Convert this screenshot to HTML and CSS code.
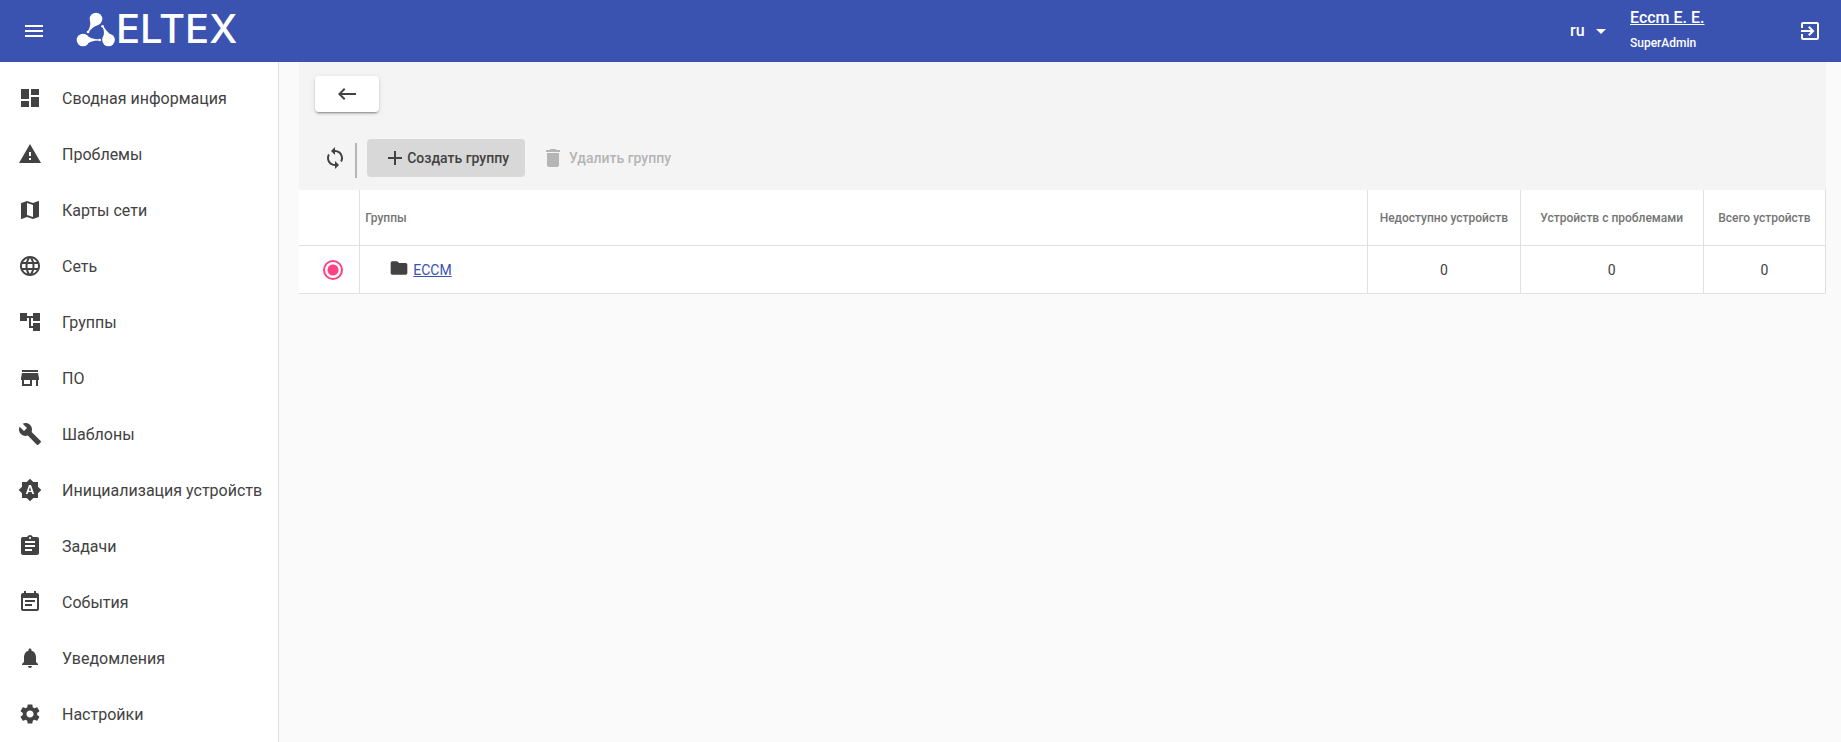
FILE: index.html
```
<!DOCTYPE html>
<html lang="ru">
<head>
    <meta charset="UTF-8">
    <meta name="viewport" content="width=device-width, initial-scale=1.0">
    <title>ECCM</title>
    <link rel="stylesheet" href="styles.css">
</head>
<body>
    <header class="header">
        <button class="icon-button" type="button" aria-label="Меню">
            <svg class="icon" viewBox="0 0 24 24"><path d="M3 18h18v-2H3v2zm0-5h18v-2H3v2zm0-7v2h18V6H3z"/></svg>
        </button>
        <a class="logo" href="#">
            <svg class="logo-mark" viewBox="0 0 40 36">
                <circle cx="20" cy="8" r="6.3"/>
                <circle cx="7" cy="29" r="6.3"/>
                <circle cx="32.500" cy="29" r="6.3"/>
                <path d="M13.800 9Q15.500 14 11.800 20.600L12.800 21.200Q16.500 15.500 21.500 14.200z"/>
                <path d="M38 26Q32 22.500 27.200 15L26.200 15.600Q29.500 22 26.800 26.500z"/>
                <path d="M9.500 23.300Q13.500 28.400 23.500 28.400V29.600Q13.500 29.600 9.500 34.700z"/>
                <circle cx="12" cy="21" r="1.300"/>
                <circle cx="26.500" cy="15.200" r="1.300"/>
                <circle cx="23.700" cy="29" r="1.300"/>
            </svg>
            <span class="logo-text">ELTEX</span>
        </a>
        <div class="language">
            <select class="language-select" aria-label="Язык">
                <option>ru</option>
                <option>en</option>
            </select>
            <svg class="language-arrow" viewBox="0 0 10 5"><path d="M0 0l5 5 5-5z"/></svg>
        </div>
        <div class="user">
            <a class="user-name" href="#">Eccm E. E.</a>
            <span class="user-role">SuperAdmin</span>
        </div>
        <button class="icon-button" type="button" aria-label="Выход">
            <svg class="icon" viewBox="0 0 24 24"><path d="M10.090 15.590L11.500 17l5-5-5-5-1.410 1.410L12.670 11H3v2h9.670l-2.580 2.590zM19 3H5c-1.110 0-2 .9-2 2v4h2V5h14v14H5v-4H3v4c0 1.100.89 2 2 2h14c1.100 0 2-.9 2-2V5c0-1.100-.9-2-2-2z"/></svg>
        </button>
    </header>

    <div class="page">
        <nav class="sidebar">
            <a class="nav-item" href="#">
                <svg class="icon" viewBox="0 0 24 24"><path d="M3 13h8V3H3v10zm0 8h8v-6H3v6zm10 0h8V11h-8v10zm0-18v6h8V3h-8z"/></svg>
                Сводная информация
            </a>
            <a class="nav-item" href="#">
                <svg class="icon" viewBox="0 0 24 24"><path d="M1 21h22L12 2 1 21zm12-3h-2v-2h2v2zm0-4h-2v-4h2v4z"/></svg>
                Проблемы
            </a>
            <a class="nav-item" href="#">
                <svg class="icon" viewBox="0 0 24 24"><path d="M20.500 3l-.16.030L15 5.100 9 3 3.360 4.900c-.21.070-.36.250-.36.480V20.500c0 .28.220.5.500.5l.16-.03L9 18.900l6 2.100 5.640-1.900c.21-.07.360-.25.360-.48V3.500c0-.28-.22-.5-.5-.5zM15 19l-6-2.110V5l6 2.110V19z"/></svg>
                Карты сети
            </a>
            <a class="nav-item" href="#">
                <svg class="icon" viewBox="0 0 24 24"><path d="M11.990 2C6.470 2 2 6.480 2 12s4.470 10 9.990 10C17.520 22 22 17.520 22 12S17.520 2 11.990 2zm6.930 6h-2.950c-.32-1.250-.78-2.450-1.380-3.560 1.840.63 3.370 1.910 4.330 3.560zM12 4.040c.83 1.200 1.480 2.530 1.910 3.960h-3.820c.43-1.430 1.080-2.760 1.910-3.960zM4.260 14C4.100 13.360 4 12.690 4 12s.1-1.360.26-2h3.380c-.08.66-.14 1.320-.14 2 0 .68.060 1.340.14 2H4.260zm.82 2h2.950c.32 1.250.78 2.450 1.380 3.560-1.840-.63-3.370-1.900-4.330-3.560zm2.950-8H5.080c.96-1.660 2.490-2.930 4.330-3.560C8.810 5.550 8.350 6.750 8.030 8zM12 19.960c-.83-1.200-1.480-2.530-1.910-3.960h3.820c-.43 1.430-1.080 2.760-1.910 3.960zM14.340 14H9.660c-.09-.66-.16-1.320-.16-2 0-.68.070-1.350.16-2h4.680c.09.650.16 1.320.16 2 0 .68-.07 1.340-.16 2zm.25 5.560c.6-1.110 1.060-2.310 1.380-3.560h2.950c-.96 1.650-2.490 2.930-4.330 3.560zM16.360 14c.08-.66.140-1.320.14-2 0-.68-.06-1.340-.14-2h3.380c.16.640.26 1.310.26 2s-.1 1.360-.26 2h-3.380z"/></svg>
                Сеть
            </a>
            <a class="nav-item" href="#">
                <svg class="icon" viewBox="0 0 24 24"><path d="M22 11V3h-7v3H9V3H2v8h7V8h2v10h4v3h7v-8h-7v3h-2V8h2v3z"/></svg>
                Группы
            </a>
            <a class="nav-item" href="#">
                <svg class="icon" viewBox="0 0 24 24"><path d="M20 4H4v2h16V4zm1 10v-2l-1-5H4l-1 5v2h1v6h10v-6h4v6h2v-6h1zm-9 4H6v-4h6v4z"/></svg>
                ПО
            </a>
            <a class="nav-item" href="#">
                <svg class="icon" viewBox="0 0 24 24"><path d="M22.700 19l-9.100-9.100c.9-2.300.4-5-1.500-6.900-2-2-5-2.400-7.400-1.300L9 6 6 9 1.600 4.700C.4 7.100.9 10.100 2.900 12.100c1.900 1.900 4.600 2.400 6.900 1.500l9.100 9.100c.4.4 1 .4 1.400 0l2.300-2.300c.5-.4.5-1.100.1-1.400z"/></svg>
                Шаблоны
            </a>
            <a class="nav-item" href="#">
                <svg class="icon" viewBox="0 0 24 24"><path d="M10.850 12.650h2.300L12 9l-1.150 3.650zM20 8.690V4h-4.690L12 .69 8.690 4H4v4.690L.69 12 4 15.310V20h4.690L12 23.310 15.310 20H20v-4.690L23.310 12 20 8.690zM14.300 16l-.7-2h-3.200l-.7 2H7.800L11 7h2l3.200 9h-1.900z"/></svg>
                Инициализация устройств
            </a>
            <a class="nav-item" href="#">
                <svg class="icon" viewBox="0 0 24 24"><path d="M19 3h-4.180C14.400 1.840 13.300 1 12 1c-1.300 0-2.400.84-2.820 2H5c-1.100 0-2 .9-2 2v14c0 1.100.9 2 2 2h14c1.100 0 2-.9 2-2V5c0-1.100-.9-2-2-2zm-7 0c.55 0 1 .45 1 1s-.45 1-1 1-1-.45-1-1 .45-1 1-1zm2 14H7v-2h7v2zm3-4H7v-2h10v2zm0-4H7V7h10v2z"/></svg>
                Задачи
            </a>
            <a class="nav-item" href="#">
                <svg class="icon" viewBox="0 0 24 24"><path d="M17 10H7v2h10v-2zm2-7h-1V1h-2v2H8V1H6v2H5c-1.110 0-2 .9-2 2v14c0 1.100.89 2 2 2h14c1.100 0 2-.9 2-2V5c0-1.100-.9-2-2-2zm0 16H5V8h14v11zm-5-5H7v2h7v-2z"/></svg>
                События
            </a>
            <a class="nav-item" href="#">
                <svg class="icon" viewBox="0 0 24 24"><path d="M12 22c1.100 0 2-.9 2-2h-4c0 1.100.89 2 2 2zm6-6v-5c0-3.070-1.640-5.640-4.500-6.320V4c0-.83-.67-1.500-1.500-1.500s-1.500.67-1.500 1.500v.68C7.630 5.360 6 7.920 6 11v5l-2 2v1h16v-1l-2-2z"/></svg>
                Уведомления
            </a>
            <a class="nav-item" href="#">
                <svg class="icon" viewBox="0 0 24 24"><path d="M19.140 12.940c.04-.3.060-.61.060-.94 0-.32-.02-.64-.07-.94l2.030-1.580c.18-.14.230-.41.120-.61l-1.920-3.320c-.12-.22-.37-.29-.59-.22l-2.390.96c-.5-.38-1.030-.7-1.620-.94l-.36-2.540c-.04-.24-.24-.41-.48-.41h-3.840c-.24 0-.43.170-.47.410l-.36 2.540c-.59.240-1.130.57-1.620.94l-2.390-.96c-.22-.08-.47 0-.59.220L2.740 8.870c-.12.210-.08.470.12.610l2.030 1.580c-.05.300-.09.630-.09.940s.02.640.07.940l-2.030 1.580c-.18.140-.23.410-.12.610l1.920 3.320c.12.220.37.290.59.220l2.390-.96c.5.380 1.030.7 1.620.94l.36 2.540c.05.240.24.410.48.410h3.840c.24 0 .44-.17.47-.41l.36-2.540c.59-.24 1.130-.56 1.620-.94l2.390.96c.22.080.47 0 .59-.22l1.920-3.320c.12-.22.070-.47-.12-.61l-2.010-1.580zM12 15.600c-1.980 0-3.600-1.620-3.600-3.600s1.620-3.600 3.600-3.600 3.600 1.620 3.600 3.600-1.620 3.600-3.600 3.600z"/></svg>
                Настройки
            </a>
        </nav>

        <main class="content">
            <div class="panel">
                <button class="back-button" type="button" aria-label="Назад">
                    <svg class="icon" viewBox="0 0 24 24"><path d="M21 11H6.830l3.580-3.590L9 6l-6 6 6 6 1.410-1.410L6.830 13H21z"/></svg>
                </button>
                <div class="toolbar">
                    <button class="refresh-button" type="button" aria-label="Обновить">
                        <svg class="icon" viewBox="0 0 24 24"><path d="M12 4V1L8 5l4 4V6c3.310 0 6 2.690 6 6 0 1.010-.25 1.970-.7 2.800l1.460 1.460C19.540 15.030 20 13.570 20 12c0-4.420-3.580-8-8-8zm0 14c-3.310 0-6-2.690-6-6 0-1.010.25-1.970.7-2.800L5.240 7.740C4.460 8.970 4 10.430 4 12c0 4.420 3.580 8 8 8v3l4-4-4-4v3z"/></svg>
                    </button>
                    <span class="divider"></span>
                    <button class="tool-button create" type="button">
                        <svg class="icon" viewBox="0 0 24 24"><path d="M19 13h-6v6h-2v-6H5v-2h6V5h2v6h6v2z"/></svg>
                        Создать группу
                    </button>
                    <button class="tool-button delete" type="button" disabled>
                        <svg class="icon" viewBox="0 0 24 24"><path d="M6 19c0 1.100.9 2 2 2h8c1.100 0 2-.9 2-2V7H6v12zM19 4h-3.500l-1-1h-5l-1 1H5v2h14V4z"/></svg>
                        Удалить группу
                    </button>
                </div>
            </div>

            <table class="groups">
                <thead>
                    <tr>
                        <th class="col-select"></th>
                        <th class="col-name">Группы</th>
                        <th class="col-down">Недоступно устройств</th>
                        <th class="col-problem">Устройств с проблемами</th>
                        <th class="col-total">Всего устройств</th>
                    </tr>
                </thead>
                <tbody>
                    <tr>
                        <td class="col-select"><input class="radio" type="radio" name="group" aria-label="ECCM" checked></td>
                        <td class="col-name">
                            <div class="group-cell">
                                <svg class="folder" viewBox="0 0 24 24"><path d="M10 4H4c-1.100 0-1.990.9-1.990 2L2 18c0 1.100.9 2 2 2h16c1.100 0 2-.9 2-2V8c0-1.100-.9-2-2-2h-8l-2-2z"/></svg>
                                <a class="group-link" href="#">ECCM</a>
                            </div>
                        </td>
                        <td>0</td>
                        <td>0</td>
                        <td>0</td>
                    </tr>
                </tbody>
            </table>
        </main>
    </div>
</body>
</html>
```
FILE: styles.css
```
* {
    box-sizing: border-box;
}
body {
    margin: 0;
    min-height: 100vh;
    display: flex;
    flex-direction: column;
    font-family: Roboto, "Noto Sans", sans-serif;
    font-size: 14px;
    color: #424242;
    background-color: #fafafa;
}
button {
    padding: 0;
    border: none;
    background: none;
    font: inherit;
    color: inherit;
    cursor: pointer;
}
.icon {
    width: 24px;
    height: 24px;
    flex-shrink: 0;
    fill: currentColor;
}
.header {
    display: flex;
    align-items: center;
    height: 62px;
    padding: 0 19px 0 22px;
    background-color: #3a53b0;
    color: #fff;
}
.icon-button {
    display: flex;
}
.logo {
    display: flex;
    align-items: center;
    margin: 0 auto 0 30px;
    padding-bottom: 4px;
    color: #fff;
    text-decoration: none;
}
.logo-mark {
    width: 40px;
    height: 36px;
    fill: currentColor;
}
.logo-text {
    font-family: Inter, sans-serif;
    font-size: 40px;
    font-weight: 500;
    line-height: 36px;
}
.language {
    position: relative;
    margin-right: 24px;
    padding-bottom: 2px;
}
.language-select {
    display: block;
    width: 36px;
    padding: 0;
    border: none;
    appearance: none;
    background: none;
    font: 500 16px Roboto, sans-serif;
    color: #fff;
}
.language-select option {
    color: #424242;
}
.language-arrow {
    position: absolute;
    right: 0;
    top: 8px;
    width: 10px;
    height: 5px;
    fill: currentColor;
    pointer-events: none;
}
.user {
    display: flex;
    flex-direction: column;
    gap: 8px;
    width: 168px;
    padding-bottom: 2px;
    font-weight: 500;
}
.user-name {
    font-size: 16px;
    line-height: 18px;
    color: #fff;
}
.user-role {
    font-size: 12px;
    line-height: 16px;
}
.page {
    display: flex;
    flex: 1;
}
.sidebar {
    flex-shrink: 0;
    padding: 8px 16px 0 18px;
    border-right: 1px solid #e0e0e0;
    background-color: #fff;
}
.nav-item {
    display: flex;
    align-items: center;
    gap: 20px;
    height: 56px;
    font-size: 16px;
    color: #424242;
    text-decoration: none;
}
.content {
    flex: 1;
    padding: 0 15px 0 20px;
}
.panel {
    padding: 14px 16px 12px;
    background-color: #f4f4f4;
}
.back-button {
    display: flex;
    align-items: center;
    justify-content: center;
    width: 64px;
    height: 36px;
    border-radius: 4px;
    background-color: #fff;
    box-shadow: 0 3px 1px -2px rgba(0, 0, 0, 0.2), 0 2px 2px 0 rgba(0, 0, 0, 0.14), 0 1px 5px 0 rgba(0, 0, 0, 0.12);
}
.toolbar {
    display: flex;
    align-items: center;
    margin-top: 26px;
    height: 40px;
}
.refresh-button {
    display: flex;
    margin: 0 8px;
}
.divider {
    align-self: flex-end;
    width: 2px;
    height: 35px;
    margin-right: 10px;
    background-color: #b5b5b5;
}
.tool-button {
    display: flex;
    align-items: center;
    height: 38px;
    padding: 0 16px;
    border-radius: 4px;
    font-weight: 500;
}
.create {
    background-color: #d8d8d8;
}
.delete {
    gap: 4px;
    color: #b5b5b5;
    cursor: default;
}
.groups {
    width: 100%;
    table-layout: fixed;
    border-collapse: separate;
    border-spacing: 0;
    background-color: #fff;
    text-align: center;
}
.groups th,
.groups td {
    padding: 0;
    border-right: 1px solid #e0e0e0;
    border-bottom: 1px solid #e0e0e0;
}
.groups th {
    height: 56px;
    font-size: 12px;
    font-weight: 500;
    color: #757575;
}
.groups td {
    height: 48px;
}
.col-select {
    width: 4%;
}
.groups .col-name {
    padding-left: 5px;
    text-align: left;
}
.col-down {
    width: 10%;
}
.col-problem {
    width: 12%;
}
.col-total {
    width: 8%;
}
.radio {
    display: block;
    appearance: none;
    width: 20px;
    height: 20px;
    margin: 0 auto 0 24px;
    border: 2px solid #ff4081;
    border-radius: 50%;
    background: radial-gradient(circle, #ff4081 5px, transparent 6px);
}
.group-cell {
    display: flex;
    align-items: center;
    gap: 4px;
    padding-left: 24px;
}
.folder {
    width: 20px;
    height: 20px;
    margin-bottom: 4px;
    fill: currentColor;
}
.group-link {
    color: #3a53b0;
}
```
